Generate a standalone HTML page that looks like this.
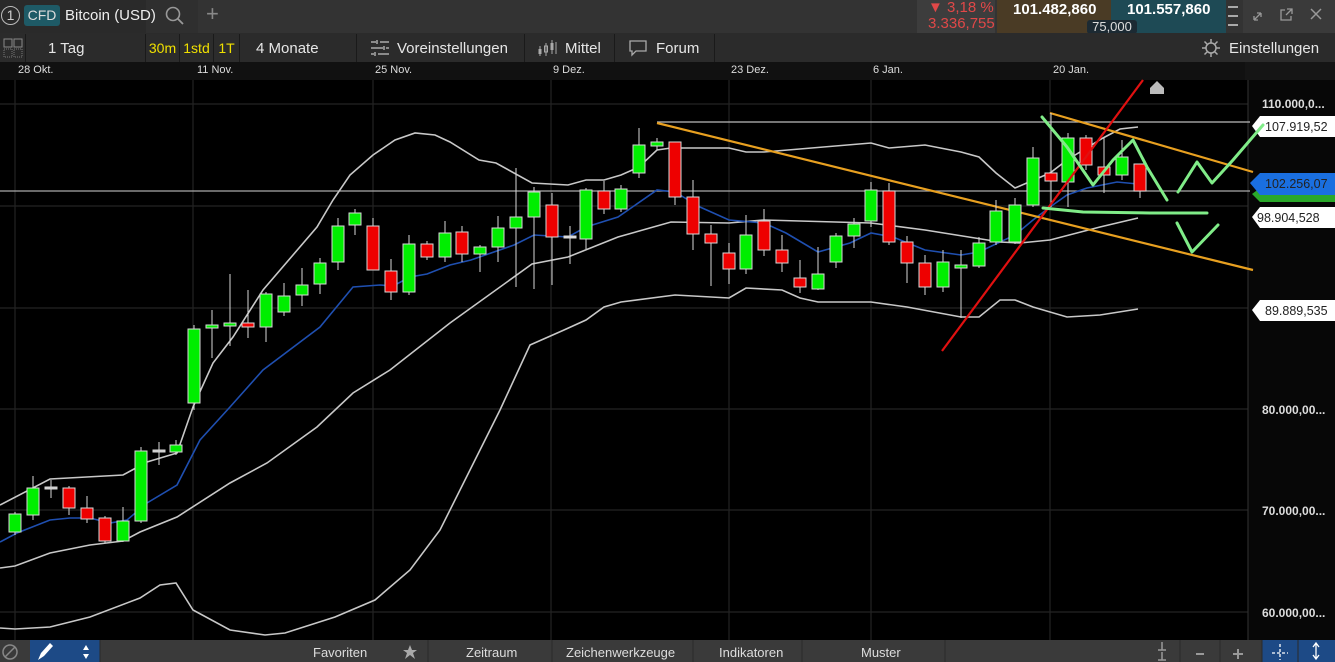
<!DOCTYPE html>
<html><head><meta charset="utf-8"><style>
*{margin:0;padding:0;box-sizing:border-box}
body{width:1335px;height:662px;overflow:hidden;background:#000;font-family:"Liberation Sans",sans-serif;position:relative;color:#e6e6e6}
.a{position:absolute;white-space:nowrap}
</style></head><body>
<!-- top row -->
<div class="a" style="left:0;top:0;width:1335px;height:33px;background:#333"></div>
<div class="a" style="left:0;top:0;width:146px;height:33px;background:#2a2a2a"></div>
<div class="a" style="left:146px;top:0;width:52px;height:33px;background:#2f2f2f"></div>
<div class="a" style="left:1px;top:6px;width:19px;height:19px;border:1.5px solid #bbb;border-radius:50%;font-size:14px;text-align:center;line-height:16px;color:#ccc">1</div>
<div class="a" style="left:24px;top:5px;width:36px;height:21px;background:#1e5a66;border-radius:3px;font-size:14px;line-height:21px;text-align:center;color:#ddd">CFD</div>
<div class="a" style="left:65px;top:5px;font-size:15px;line-height:21px;color:#eee">Bitcoin (USD)</div>
<svg class="a" style="left:164px;top:5px" width="22" height="22"><circle cx="9" cy="9" r="6.5" fill="none" stroke="#999" stroke-width="1.6"/><line x1="14" y1="14" x2="19" y2="19" stroke="#999" stroke-width="1.8"/></svg>
<div class="a" style="left:206px;top:1px;font-size:22px;color:#888">+</div>
<div class="a" style="left:917px;top:0;width:78px;height:33px;background:#3d3d3d"></div>
<div class="a" style="left:928px;top:-1px;font-size:15px;color:#e04848">▼ 3,18 %</div>
<div class="a" style="left:928px;top:15px;font-size:15px;color:#e04848">3.336,755</div>
<div class="a" style="left:997px;top:0;width:114px;height:33px;background:#4a3b25"></div>
<div class="a" style="left:1013px;top:1px;font-size:15px;font-weight:bold;color:#fff">101.482,860</div>
<div class="a" style="left:1111px;top:0;width:115px;height:33px;background:#1e4a55"></div>
<div class="a" style="left:1127px;top:1px;font-size:15px;font-weight:bold;color:#fff">101.557,860</div>
<div class="a" style="left:1087px;top:20px;width:50px;height:14px;background:#1c2a33;border-radius:3px;font-size:13px;line-height:14px;text-align:center;color:#ddd">75,000</div>
<div class="a" style="left:1228px;top:6px;width:10px;height:20px;border-top:2px solid #aaa;border-bottom:2px solid #aaa"></div>
<div class="a" style="left:1228px;top:15px;width:10px;height:2px;background:#aaa"></div>
<div class="a" style="left:1243px;top:0;width:92px;height:33px;background:#3a3a3a"></div>
<svg class="a" style="left:1250px;top:6px" width="80" height="18"><path d="M4 14 L11 7 M4 14v-4 M4 14h4 M11 7h-4 M11 7v4" stroke="#999" fill="none" stroke-width="1.3"/><path d="M35 4h-4v10h10v-4 M37 3h5v5 M42 3l-6 6" stroke="#999" fill="none" stroke-width="1.3"/><path d="M61 3l10 10 M71 3l-10 10" stroke="#999" stroke-width="1.5"/></svg>
<!-- second row -->
<div class="a" style="left:0;top:33px;width:1335px;height:29px;background:#2b2b2b"></div>
<svg class="a" style="left:3px;top:38px" width="20" height="20"><rect x="1" y="1" width="8" height="8" fill="none" stroke="#888"/><rect x="11" y="1" width="8" height="8" fill="none" stroke="#888"/><rect x="1" y="11" width="8" height="8" fill="none" stroke="#777" stroke-dasharray="1 1"/><rect x="11" y="11" width="8" height="8" fill="none" stroke="#777" stroke-dasharray="1 1"/></svg>
<div class="a" style="left:25px;top:34px;width:1px;height:28px;background:#1a1a1a"></div>
<div class="a" style="left:48px;top:40px;font-size:15px">1 Tag</div>
<div class="a" style="left:145px;top:34px;width:1px;height:28px;background:#1a1a1a"></div>
<div class="a" style="left:146px;top:34px;width:33px;height:28px;background:#2c2c2c;font-size:14px;line-height:28px;text-align:center;color:#f0e000">30m</div>
<div class="a" style="left:180px;top:34px;width:33px;height:28px;background:#2c2c2c;font-size:14px;line-height:28px;text-align:center;color:#f0e000">1std</div>
<div class="a" style="left:214px;top:34px;width:25px;height:28px;background:#2c2c2c;font-size:14px;line-height:28px;text-align:center;color:#f0e000">1T</div>
<div class="a" style="left:179px;top:34px;width:1px;height:28px;background:#1a1a1a"></div>
<div class="a" style="left:213px;top:34px;width:1px;height:28px;background:#1a1a1a"></div>
<div class="a" style="left:239px;top:34px;width:1px;height:28px;background:#1a1a1a"></div>
<div class="a" style="left:256px;top:40px;font-size:15px">4 Monate</div>
<div class="a" style="left:356px;top:34px;width:1px;height:28px;background:#1a1a1a"></div>
<svg class="a" style="left:370px;top:39px" width="20" height="18"><path d="M1 3h5 M10 3h9 M1 9h12 M16 9h3 M1 15h3 M8 15h11 M7 1v4 M14 7v4 M5 13v4" stroke="#aaa" stroke-width="1.5"/></svg>
<div class="a" style="left:397px;top:40px;font-size:15px">Voreinstellungen</div>
<div class="a" style="left:524px;top:34px;width:1px;height:28px;background:#1a1a1a"></div>
<svg class="a" style="left:537px;top:38px" width="22" height="20"><path d="M3 8v10 M9 5v13 M15 2v14 M19 4v12" stroke="#aaa"/><rect x="1.5" y="11" width="3" height="5" fill="#aaa"/><rect x="7.5" y="8" width="3" height="6" fill="none" stroke="#aaa"/><rect x="13.5" y="5" width="3" height="7" fill="#aaa"/></svg>
<div class="a" style="left:565px;top:40px;font-size:15px">Mittel</div>
<div class="a" style="left:614px;top:34px;width:1px;height:28px;background:#1a1a1a"></div>
<svg class="a" style="left:628px;top:39px" width="20" height="18"><path d="M2 2h16v10h-10l-4 4v-4h-2z" fill="none" stroke="#aaa" stroke-width="1.3"/></svg>
<div class="a" style="left:656px;top:40px;font-size:15px">Forum</div>
<div class="a" style="left:714px;top:34px;width:1px;height:28px;background:#1a1a1a"></div>
<svg class="a" style="left:1201px;top:38px" width="20" height="20"><circle cx="10" cy="10" r="5" fill="none" stroke="#aaa" stroke-width="1.5"/><path d="M10 1v4 M10 15v4 M1 10h4 M15 10h4 M3.5 3.5l2.5 2.5 M14 14l2.5 2.5 M3.5 16.5l2.5-2.5 M14 6l2.5-2.5" stroke="#aaa" stroke-width="1.5"/></svg>
<div class="a" style="left:1229px;top:40px;font-size:15px">Einstellungen</div>
<!-- date row -->
<div class="a" style="left:0;top:62px;width:1335px;height:18px;background:#111"></div>
<div class="a" style="left:1245px;top:62px;width:90px;height:18px;background:#151515"></div>
<div style="font-size:11px;color:#ddd">
<div class="a" style="left:18px;top:64px">28 Okt.</div>
<div class="a" style="left:197px;top:64px">11 Nov.</div>
<div class="a" style="left:375px;top:64px">25 Nov.</div>
<div class="a" style="left:553px;top:64px">9 Dez.</div>
<div class="a" style="left:731px;top:64px">23 Dez.</div>
<div class="a" style="left:873px;top:64px">6 Jan.</div>
<div class="a" style="left:1053px;top:64px">20 Jan.</div>
</div>
<!-- chart -->
<svg class="a" style="left:0;top:0" width="1335" height="640" viewBox="0 0 1335 640">
<rect x="1248" y="80" width="87" height="560" fill="#070707"/>
<g stroke="#232323" stroke-width="1.2">
<line x1="0" y1="104" x2="1248" y2="104"/><line x1="0" y1="206" x2="1248" y2="206"/><line x1="0" y1="308" x2="1248" y2="308"/><line x1="0" y1="409" x2="1248" y2="409"/><line x1="0" y1="510" x2="1248" y2="510"/><line x1="0" y1="612" x2="1248" y2="612"/>
<line x1="15" y1="80" x2="15" y2="640"/><line x1="193" y1="80" x2="193" y2="640"/><line x1="373" y1="80" x2="373" y2="640"/><line x1="551" y1="80" x2="551" y2="640"/><line x1="729" y1="80" x2="729" y2="640"/><line x1="871" y1="80" x2="871" y2="640"/><line x1="1050" y1="80" x2="1050" y2="640"/>
</g>
<line x1="1248" y1="80" x2="1248" y2="640" stroke="#333"/>
<line x1="0" y1="191" x2="1250" y2="191" stroke="#aaa" stroke-width="1.2"/>
<line x1="657" y1="122" x2="1250" y2="122" stroke="#bbb" stroke-width="1.2"/>
<g fill="none" stroke="#c8c8c8" stroke-width="1.6">
<polyline points="0,505 50,479 123,475 147,462 177,453 193,407 213,363 233,337 263,290 317,227 333,200 350,175 373,155 395,140 415,133 435,135 450,142 479,160 496,163 532,183 568,185 586,180 604,180 621,175 639,167 657,150 671,148 729,148 746,152 764,152 871,143 889,148 925,145 961,152 979,157 996,173 1015,188 1050,173 1067,160 1103,138 1120,129 1138,127"/>
<polyline points="0,568 15,566 50,553 90,545 123,541 140,532 177,517 230,483 267,463 317,427 353,393 390,370 450,323 532,264 568,257 618,237 671,222 729,223 764,220 871,223 925,230 1000,242 1020,243 1050,240 1100,227 1138,218"/>
<polyline points="0,628 15,629 50,627 70,622 90,617 140,598 160,585 176,583 193,610 230,630 265,635 285,633 335,617 375,600 410,570 440,530 470,470 500,410 530,345 564,330 586,320 604,307 621,302 675,295 729,298 746,288 782,290 800,298 818,302 871,302 907,307 961,317 979,317 1000,300 1015,300 1033,307 1067,317 1100,315 1138,309"/>
</g>
<polyline fill="none" stroke="#1f4fb0" stroke-width="1.6" points="0,542 17,533 50,520 70,518 90,518 110,523 127,520 147,503 177,485 200,440 230,407 263,370 320,327 353,287 380,285 393,286 410,277 427,274 450,265 471,260 514,245 534,235 568,237 586,227 618,217 657,190 675,192 700,207 729,220 764,223 786,233 818,252 850,243 871,233 893,237 925,250 961,255 979,252 1015,235 1033,220 1050,207 1067,195 1087,188 1117,182 1138,184"/>
<line x1="657" y1="123" x2="1253" y2="270" stroke="#e8a020" stroke-width="2.2"/>
<line x1="1050" y1="113" x2="1253" y2="172" stroke="#e8a020" stroke-width="2.2"/>
<path d="M1150 94v-6l7-7 7 7v6z" fill="#bbb"/>
<g font-family="Liberation Sans" font-size="12" font-weight="bold" fill="#ddd">
<text x="1262" y="108">110.000,0...</text>
<text x="1262" y="414">80.000,00...</text>
<text x="1262" y="515">70.000,00...</text>
<text x="1262" y="617">60.000,00...</text>
</g>
<path d="M1252 126l8-10h75v21h-75z" fill="#fff"/>
<path d="M1252 194l8-6h75v14h-75z" fill="#2aa82a"/>
<path d="M1250 183l10-10h75v22h-75z" fill="#1a6fe0"/>
<path d="M1252 217l8-10h75v21h-75z" fill="#fff"/>
<path d="M1252 310l8-10h75v21h-75z" fill="#fff"/>
<g font-family="Liberation Sans" font-size="12.5" fill="#222">
<text x="1265" y="131">107.919,52</text>
<text x="1265" y="188">102.256,07</text>
<text x="1257" y="222">98.904,528</text>
<text x="1265" y="315">89.889,535</text>
</g>
<g fill="none" stroke="#80ec88" stroke-width="3" stroke-linecap="round" stroke-linejoin="round">
<polyline points="1178,192 1197,162 1212,183 1233,160 1263,125"/>
<polyline points="1177,223 1192,252 1218,225"/>
</g>
</svg>
<!-- bottom -->
<div class="a" style="left:0;top:640px;width:1335px;height:22px;background:#3a3a3a"></div>
<div class="a" style="left:30px;top:640px;width:70px;height:22px;background:#1d4a86"></div>
<div class="a" style="left:1262px;top:640px;width:73px;height:22px;background:#1d4a86"></div>
<svg class="a" style="left:0;top:640px" width="1335" height="22">
<circle cx="10" cy="12" r="7" fill="none" stroke="#888" stroke-width="1.5"/><line x1="5" y1="17" x2="15" y2="7" stroke="#888" stroke-width="1.5"/>
<path d="M38 20l3-7 9-10 3 3-9 10z" fill="#fff"/>
<path d="M86 5l-3 5h6z M86 19l-3-5h6z" fill="#fff"/>
<line x1="100" y1="0" x2="100" y2="22" stroke="#2a2a2a"/>
<path d="M410 5l2 5h5l-4 3 2 6-5-4-5 4 2-6-4-3h5z" fill="#aaa"/>
<g stroke="#2a2a2a"><line x1="428" y1="0" x2="428" y2="22"/><line x1="552" y1="0" x2="552" y2="22"/><line x1="693" y1="0" x2="693" y2="22"/><line x1="802" y1="0" x2="802" y2="22"/><line x1="945" y1="0" x2="945" y2="22"/><line x1="1180" y1="0" x2="1180" y2="22"/><line x1="1220" y1="0" x2="1220" y2="22"/><line x1="1262" y1="0" x2="1262" y2="22"/><line x1="1298" y1="0" x2="1298" y2="22"/></g>
<path d="M1162 2v8 M1158 10h8 M1162 12v8 M1158 20h8" stroke="#999" stroke-width="1.5"/>
<line x1="1196" y1="14" x2="1204" y2="14" stroke="#999" stroke-width="2"/>
<path d="M1238 9v10 M1233 14h10" stroke="#999" stroke-width="2"/>
<path d="M1280 4v16 M1272 13h16" stroke="#fff" stroke-width="1.3" stroke-dasharray="3 2"/>
<path d="M1316 3v16 M1313 7l3-4 3 4 M1313 15l3 4 3-4" stroke="#fff" stroke-width="1.3" fill="none"/>
</svg>
<div style="font-size:13px;color:#ddd">
<div class="a" style="left:313px;top:645px">Favoriten</div>
<div class="a" style="left:466px;top:645px">Zeitraum</div>
<div class="a" style="left:566px;top:645px">Zeichenwerkzeuge</div>
<div class="a" style="left:719px;top:645px">Indikatoren</div>
<div class="a" style="left:861px;top:645px">Muster</div>
</div>
<svg class="a" style="left:0;top:0" width="1250" height="640">
<g stroke="#d8d8d8" stroke-width="1">
<line x1="15" y1="512" x2="15" y2="535"/><rect x="9" y="514" width="12" height="18" fill="#00ee00"/>
<line x1="33" y1="476" x2="33" y2="520"/><rect x="27" y="488" width="12" height="27" fill="#00ee00"/>
<line x1="51" y1="480" x2="51" y2="498"/><rect x="45" y="487" width="12" height="2" fill="#ccc"/>
<line x1="69" y1="486" x2="69" y2="515"/><rect x="63" y="488" width="12" height="20" fill="#ee0000"/>
<line x1="87" y1="496" x2="87" y2="523"/><rect x="81" y="508" width="12" height="11" fill="#ee0000"/>
<line x1="105" y1="516" x2="105" y2="543"/><rect x="99" y="518" width="12" height="23" fill="#ee0000"/>
<line x1="123" y1="507" x2="123" y2="542"/><rect x="117" y="521" width="12" height="20" fill="#00ee00"/>
<line x1="141" y1="447" x2="141" y2="523"/><rect x="135" y="451" width="12" height="70" fill="#00ee00"/>
<line x1="159" y1="442" x2="159" y2="465"/><rect x="153" y="450" width="12" height="2" fill="#ccc"/>
<line x1="176" y1="440" x2="176" y2="455"/><rect x="170" y="445" width="12" height="7" fill="#00ee00"/>
<line x1="194" y1="325" x2="194" y2="410"/><rect x="188" y="329" width="12" height="74" fill="#00ee00"/>
<line x1="212" y1="310" x2="212" y2="358"/><rect x="206" y="325" width="12" height="3" fill="#00ee00"/>
<line x1="230" y1="274" x2="230" y2="346"/><rect x="224" y="323" width="12" height="3" fill="#00ee00"/>
<line x1="248" y1="290" x2="248" y2="338"/><rect x="242" y="323" width="12" height="4" fill="#ee0000"/>
<line x1="266" y1="292" x2="266" y2="342"/><rect x="260" y="294" width="12" height="33" fill="#00ee00"/>
<line x1="284" y1="283" x2="284" y2="316"/><rect x="278" y="296" width="12" height="16" fill="#00ee00"/>
<line x1="302" y1="268" x2="302" y2="306"/><rect x="296" y="285" width="12" height="10" fill="#00ee00"/>
<line x1="320" y1="258" x2="320" y2="294"/><rect x="314" y="263" width="12" height="21" fill="#00ee00"/>
<line x1="338" y1="218" x2="338" y2="270"/><rect x="332" y="226" width="12" height="36" fill="#00ee00"/>
<line x1="355" y1="209" x2="355" y2="235"/><rect x="349" y="213" width="12" height="12" fill="#00ee00"/>
<line x1="373" y1="218" x2="373" y2="270"/><rect x="367" y="226" width="12" height="44" fill="#ee0000"/>
<line x1="391" y1="259" x2="391" y2="300"/><rect x="385" y="271" width="12" height="21" fill="#ee0000"/>
<line x1="409" y1="235" x2="409" y2="295"/><rect x="403" y="244" width="12" height="48" fill="#00ee00"/>
<line x1="427" y1="241" x2="427" y2="260"/><rect x="421" y="244" width="12" height="13" fill="#ee0000"/>
<line x1="445" y1="221" x2="445" y2="262"/><rect x="439" y="233" width="12" height="24" fill="#00ee00"/>
<line x1="462" y1="226" x2="462" y2="262"/><rect x="456" y="232" width="12" height="22" fill="#ee0000"/>
<line x1="480" y1="245" x2="480" y2="272"/><rect x="474" y="247" width="12" height="7" fill="#00ee00"/>
<line x1="498" y1="216" x2="498" y2="262"/><rect x="492" y="228" width="12" height="19" fill="#00ee00"/>
<line x1="516" y1="168" x2="516" y2="287"/><rect x="510" y="217" width="12" height="11" fill="#00ee00"/>
<line x1="534" y1="187" x2="534" y2="289"/><rect x="528" y="192" width="12" height="25" fill="#00ee00"/>
<line x1="552" y1="193" x2="552" y2="285"/><rect x="546" y="205" width="12" height="32" fill="#ee0000"/>
<line x1="570" y1="226" x2="570" y2="264"/><rect x="564" y="236" width="12" height="2" fill="#ddd"/>
<line x1="586" y1="188" x2="586" y2="249"/><rect x="580" y="190" width="12" height="49" fill="#00ee00"/>
<line x1="604" y1="181" x2="604" y2="214"/><rect x="598" y="191" width="12" height="18" fill="#ee0000"/>
<line x1="621" y1="185" x2="621" y2="212"/><rect x="615" y="189" width="12" height="20" fill="#00ee00"/>
<line x1="639" y1="128" x2="639" y2="178"/><rect x="633" y="145" width="12" height="28" fill="#00ee00"/>
<line x1="657" y1="138" x2="657" y2="150"/><rect x="651" y="142" width="12" height="4" fill="#00ee00"/>
<line x1="675" y1="142" x2="675" y2="205"/><rect x="669" y="142" width="12" height="55" fill="#ee0000"/>
<line x1="693" y1="180" x2="693" y2="250"/><rect x="687" y="197" width="12" height="37" fill="#ee0000"/>
<line x1="711" y1="225" x2="711" y2="286"/><rect x="705" y="234" width="12" height="9" fill="#ee0000"/>
<line x1="729" y1="243" x2="729" y2="284"/><rect x="723" y="253" width="12" height="16" fill="#ee0000"/>
<line x1="746" y1="215" x2="746" y2="274"/><rect x="740" y="235" width="12" height="34" fill="#00ee00"/>
<line x1="764" y1="209" x2="764" y2="256"/><rect x="758" y="221" width="12" height="29" fill="#ee0000"/>
<line x1="782" y1="235" x2="782" y2="272"/><rect x="776" y="250" width="12" height="13" fill="#ee0000"/>
<line x1="800" y1="260" x2="800" y2="293"/><rect x="794" y="278" width="12" height="9" fill="#ee0000"/>
<line x1="818" y1="247" x2="818" y2="290"/><rect x="812" y="274" width="12" height="15" fill="#00ee00"/>
<line x1="836" y1="233" x2="836" y2="268"/><rect x="830" y="236" width="12" height="26" fill="#00ee00"/>
<line x1="854" y1="218" x2="854" y2="248"/><rect x="848" y="224" width="12" height="12" fill="#00ee00"/>
<line x1="871" y1="182" x2="871" y2="227"/><rect x="865" y="190" width="12" height="31" fill="#00ee00"/>
<line x1="889" y1="183" x2="889" y2="245"/><rect x="883" y="191" width="12" height="51" fill="#ee0000"/>
<line x1="907" y1="236" x2="907" y2="283"/><rect x="901" y="242" width="12" height="21" fill="#ee0000"/>
<line x1="925" y1="255" x2="925" y2="295"/><rect x="919" y="263" width="12" height="24" fill="#ee0000"/>
<line x1="943" y1="250" x2="943" y2="292"/><rect x="937" y="262" width="12" height="25" fill="#00ee00"/>
<line x1="961" y1="250" x2="961" y2="318"/><rect x="955" y="265" width="12" height="3" fill="#00ee00"/>
<line x1="979" y1="237" x2="979" y2="268"/><rect x="973" y="243" width="12" height="23" fill="#00ee00"/>
<line x1="996" y1="200" x2="996" y2="245"/><rect x="990" y="211" width="12" height="31" fill="#00ee00"/>
<line x1="1015" y1="198" x2="1015" y2="244"/><rect x="1009" y="205" width="12" height="37" fill="#00ee00"/>
<line x1="1033" y1="147" x2="1033" y2="207"/><rect x="1027" y="158" width="12" height="47" fill="#00ee00"/>
<line x1="1051" y1="113" x2="1051" y2="207"/><rect x="1045" y="173" width="12" height="8" fill="#ee0000"/>
<line x1="1068" y1="133" x2="1068" y2="207"/><rect x="1062" y="138" width="12" height="44" fill="#00ee00"/>
<line x1="1086" y1="135" x2="1086" y2="170"/><rect x="1080" y="138" width="12" height="27" fill="#ee0000"/>
<line x1="1104" y1="138" x2="1104" y2="193"/><rect x="1098" y="167" width="12" height="8" fill="#ee0000"/>
<line x1="1122" y1="140" x2="1122" y2="180"/><rect x="1116" y="157" width="12" height="18" fill="#00ee00"/>
<line x1="1140" y1="164" x2="1140" y2="198"/><rect x="1134" y="164" width="12" height="27" fill="#ee0000"/>
</g>
<line x1="942" y1="351" x2="1143" y2="80" stroke="#e01010" stroke-width="2.2"/>
<g fill="none" stroke="#80ec88" stroke-width="3" stroke-linecap="round" stroke-linejoin="round">
<polyline points="1042,117 1067,147 1093,185 1113,160 1133,140 1147,167 1167,200"/>
<polyline points="1043,208 1083,212 1150,213 1207,213"/>
</g>
</svg>
</body></html>
